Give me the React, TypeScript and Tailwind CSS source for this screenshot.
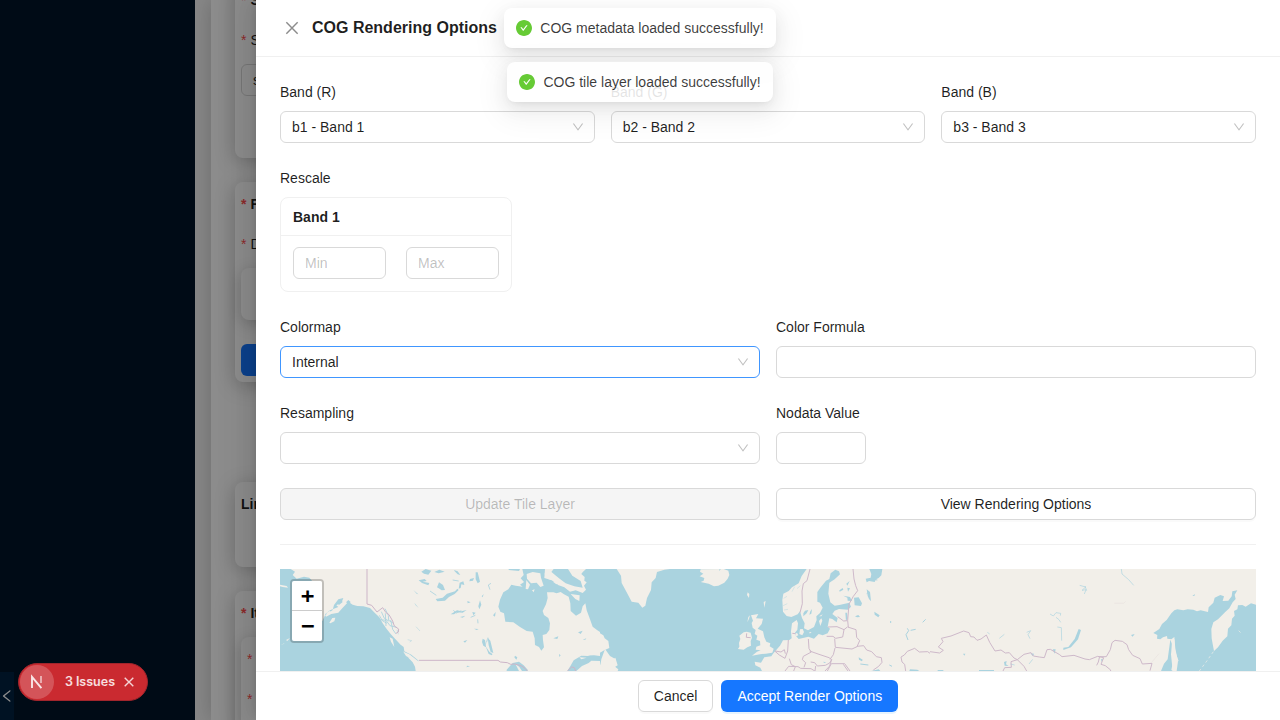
import type { ReactNode } from "react";

const DOWN =
  "M884 256h-75c-5.1 0-9.9 2.5-12.9 6.6L512 654.2 227.9 262.6c-3-4.1-7.8-6.6-12.9-6.6h-75c-6.5 0-10.3 7.4-6.5 12.7l352.6 486.1c12.8 17.6 39 17.6 51.7 0l352.6-486.1c3.9-5.3.1-12.7-6.4-12.7z";
const LEFT =
  "M724 218.3V141c0-6.7-7.7-10.4-12.9-6.3L260.3 486.8a31.86 31.86 0 000 50.3l450.8 352.1c5.3 4.1 12.9.4 12.9-6.3v-77.3c0-4.9-2.3-9.6-6.1-12.6l-360-281 360-281.1c3.8-3 6.1-7.7 6.1-12.6z";
const CHECK =
  "M512 64C264.6 64 64 264.6 64 512s200.6 448 448 448 448-200.6 448-448S759.4 64 512 64zm193.5 301.7l-210.6 292a31.8 31.8 0 01-51.7 0L318.5 484.9c-3.8-5.3 0-12.7 6.5-12.7h46.9c10.2 0 19.9 4.9 25.9 13.3l71.2 98.8 157.2-218c6-8.3 15.6-13.3 25.9-13.3H699c6.5 0 10.3 7.4 6.5 12.7z";

function Icon({ d, className }: { d: string; className: string }) {
  return (
    <svg viewBox="64 64 896 896" fill="currentColor" className={className}>
      <path d={d} />
    </svg>
  );
}

function Field({ label, children }: { label: string; children: ReactNode }) {
  return (
    <div className="min-w-0 flex-1">
      <div className="mb-2 h-[22px]">{label}</div>
      {children}
    </div>
  );
}

function Select({ value, active = false }: { value: string; active?: boolean }) {
  return (
    <div
      className={
        "flex h-8 items-center justify-between rounded-md border bg-white pl-[11px] pr-2.5 " +
        (active ? "border-[#4096ff]" : "border-[#d9d9d9]")
      }
    >
      <span>{value}</span>
      <Icon d={DOWN} className="size-3 text-black/25" />
    </div>
  );
}

function TextInput({ placeholder = "", className = "" }: { placeholder?: string; className?: string }) {
  return (
    <input
      placeholder={placeholder}
      className={"block h-8 rounded-md border border-[#d9d9d9] bg-white px-[11px] outline-none placeholder:text-black/25 " + className}
    />
  );
}

function Toast({ text }: { text: string }) {
  return (
    <div className="flex h-10 items-center gap-2 rounded-lg bg-white px-3 opacity-[0.88] shadow-[0_6px_16px_0_rgba(0,0,0,0.08),0_3px_6px_-4px_rgba(0,0,0,0.12),0_9px_28px_8px_rgba(0,0,0,0.05)]">
      <Icon d={CHECK} className="size-4 text-[#52c41a]" />
      <span>{text}</span>
    </div>
  );
}

function Star() {
  return <span className="mr-1 text-[#ff4d4f]">*</span>;
}

function WorldMap() {
  return (
    <svg viewBox="0 0 2928 306" className="block h-[102px] w-[976px] bg-[#f2efe9]" preserveAspectRatio="none">
      {/* North America */}
      <g transform="translate(-30 -27)">
        <g fill="#aad3df">
          <path d="M30 27H62L75 35 68 45 80 56 102 50 118 53 126 62 105 90 90 130 130 165 157 183 165 166 188 150 192 135 205 118 220 114 215 127 199 136 205 141 180 151 165 163 168 170 184 162 205 158 212 150 235 125 248 134 262 138 280 139 300 144 314 158 328 172 338 190 350 207 362 222 375 236 387 249 394 260 402 276 412 290 428 307 435 320 437 333H30Z" />
          <path d="M235 120l7 6-5 7 -9-6zM204 128l10-8 4 6-12 10z" />
          <path d="M385 249l16 12 2 13 21 10 22 18-3 5-17-12-15-4-12-19-13-14z" />
          <path d="M757 27L761 45 752 55 762 66 750 74 758 80 737 77 724 74 715 88 700 97 690 119 685 140 691 155 702 160 706 185 730 187 750 201 770 213 788 215 794 235 795 255 807 261 814 272 822 262 819 241 818 225 829 222 838 210 840 190 835 174 822 165 818 153 828 133 833 114 831 97 850 97 860 100 872 96 882 103 896 110 901 130 902 153 918 167 933 158 938 139 946 130 950 151 960 178 968 200 982 211 990 216V27H948L933 41 944 51 943 62 950 67 942 77 948 89 938 99 917 91 900 95 883 82 864 75 853 62 835 57 824 43 827 27Z" />
          <path d="M834 27h60l13 20 25 16 6 20-25-4-26-9-17-13-14-11zM716 27h34l-3 6-31-3z" />
          <path d="M497 117l21-4 13-12 24-7 7-8 4 4-12 12-17 9-12 11-23 2zM542 163l19-12 13 3 16-4-12 8-17-1-9 6zM566 86l3-18 11-4 3 11-9-2-2 11zM501 82l6-15 12 8 6 15-10 1-9-6zM446 61l18-4 6 6-12 2 20 4-3 7-19-7zM454 35l13-8 17 5-9 12-13-3zM493 36l15-7 16 6-18 5zM552 30l11 4 8 11-8-2-9-9zM617 37l6 0 7 28-7 5-6-12zM625 139l5-18 4 13-6 14zM607 156l10 2-7 8zM592 123l10 4-9 3zM600 57l12-3-3 8-11 2z" />
          <path d="M638 236l7 4 3 20 10 15 9 7-1 4-10-4-8-20-8-5-4-11zM653 233l8 9 9 37-8-3-6-20zM612 206l14 1-6 3zM580 244l12-4-7 8zM592 317l8 2-11 3zM735 287l7 5-3 7-6-7zM669 166l8-10-2 14zM570 171l16-4-8 6zM635 109l6-7-3 10zM850 235l15-6-3 8zM924 217l14-5-6 10zM938 239l11-4-3 4zM867 282l5 4-4 5zM430 90l15 13-5-2zM433 128l13 16-9-8z" />
          <path d="M710 329l18-20 19-4 14 11 12 13v4H710zM892 333l11-18 8-14 23-14 38-1 18 2v15l-26-1-8 7-20 9-17 15z" />
        </g>
        <g fill="#f2efe9">
          <path d="M30 74l20 4 4 5-16-2-8-2zM769 60l11 14-6 14-7-1zM770 42l18-6 23 4 2 13 8 24-10 4-11-13-17 2-12-14zM786 91l8-3-3 9zM905 27h38l-5 8-12 18-19-7zM825 27h26l-10 13 14 18 12 1 5 16 24 6 15 10-16-1-15-15-18-4-17-10-22-7zM849 65l17-5 8 6-15 7zM902 102l27 4-1 17-12-6zM935 286l30-9 10 2-22 9z" />
          <path d="M178 188l9-14 9-1-3 11-12 6zM359 232l9 4 5 25-10-16zM400 275l18 8 27 21 1 8-20-14-18-10zM169 159l11-7 4 7-12 8zM48 240l12-6-8 9zM32 254l12-4-3 2z" />
          <path d="M928 292l22 1-16 5zM961 316l18-8 11 3v22h-29zM736 311l12 10 8 12h-9z" />
        </g>
        <g fill="none" stroke="#aad3df" strokeWidth="2.5">
          <path d="M328 166l9 16 14 8M334 155l9 20 13 8M345 146l10 20 1 15 16 10M331 179l17 2 12 16 20 5M346 160l2 38M362 180l6 28 10 14M550 151l9 8 15-7M602 172l14-6M624 190l-1-12M660 89l-5-14 8-5M548 60l18 3M480 93l19 13" />
          <path strokeWidth="1.5" d="M381 209l4 14M413 239l12 3-6 4M438 200l12 13M646 254l8-22M655 235l-5 11" />
        </g>
        <g fill="none" stroke="#cdb5c8" strokeWidth="3">
          <path d="M291 27V132L305 136 321 156 338 143 348 158 357 164 368 183 373 198 386 207 385 216 378 220M447 301H684L691 306 712 308 722 313 734 312 755 318 765 325 772 333M892 333l13-12 8 2 4 10" />
        </g>
      </g>

      {/* Atlantic and Europe */}
      <g transform="translate(960 -27)">
        <path fill="#aad3df" d="M0 27H620L605 48 596 70 576 82 566 93 550 101 547 120 549 155 560 168 574 171 593 163 600 154 606 174 614 190 612 205 624 211 642 201 650 180 649 169 660 159 668 143 660 128 652 125 652 96 661 83 678 62 688 57 692 40 706 29 717 34 720 43 704 58 688 68 685 101 691 127 704 137 718 135 748 128 753 140 744 149 717 147 704 152 697 162 713 174 710 187 697 177 688 175 683 200 690 206 683 220 668 226 656 222 642 236 625 230 596 237 588 228 585 218 592 209 594 190 590 180 576 190 573 214 575 235 568 240 549 241 540 257 532 266 519 281 514 289 493 292 483 308 464 305 466 316 481 323 486 333H52L45 321 53 316 46 293 38 300 33 292 19 291 8 306 4 318 0 312V278L14 270 28 264 25 243 14 235 10 226 0 220Z" />
        <g fill="#f2efe9">
          <path d="M50 27l13 20 2 22 15 28 15 28 20 3 12 15 9-6 5-23 12-24 2-23 12-13 4-18 22-7 17-2zM302 28l-2 7 10 6-11 8 14 5-2 8-9 4 24 5 16 8 13-2 18-9 10-12 5-11-3-13-14-5zM453 166l22-4-7 13 21 1-4 16-12 14 16 8 4 18 6 13 12 5-2 9 12 7-4 12-20 3-17 2-24 4 15-12 11-4-15-2 2-9 12-4-1-13-11-4 3-12-8-5 3-12-9-7-3-14 4-7zM431 217l-13 10 3 10-4 12 1 11-4 7 17 2 11-7 11-5-1-14 4-10-4-15-12-3zM443 97l5 5-1 12-6-9zM491 126l6-3-4 20zM445 171l5-5-3 10-5 11zM600 208l8-1 4 9-5 10-9-4zM586 222l5-4 4 8-6 3zM657 183l7-8 3 7-6 16zM657 169l11-6-4 6zM630 215l5 4-8 1z" />
          <path d="M15 267l15 21 16 9-3 22 12 9-2 5-25-5-14-10-14 3 4-23z" />
        </g>
        <g fill="#aad3df">
          <path d="M610 160l5-8 10-2-5 10-10 9zM628 164l3-10 5-7-2 14zM762 113l14-1 10 18-3 8-19-2zM736 158l5 0 2 17-5 8zM800 67l-3-11 15-3 2-11-6-15h39l-3 19-8 8-8 4-4 8-17-3zM800 88l10 8 3 28-6-7-4-9zM823 155l16 11-4 6-11-8zM765 169l10-4 5 6-9 1zM742 83l8 2-6 10zM718 91l10-7 2 5-11 6zM730 107l20 4 6 12-13-1-1-9zM776 292l12 7-2 5-9-5zM814 333l22-5 5 5zM930 328l22 1 6 4h-30zM739 71l10-8-7 14z" />
          <path d="M670 305l9 2-7 2z" />
        </g>
        <g fill="none" stroke="#aad3df" strokeWidth="3">
          <path d="M922 205l4 7-8 12 6 16M932 211l15-3M968 187l9-9M872 183l0 6M868 315l8 4M362 27l-5 4M781 312l24 3M800 101l7-5M817 57l15 3" />
          <path strokeWidth="1.2" d="M551 115l10-6M549 137l13-6M552 150l12-2M584 80l-8 15M601 77l-10 9" />
        </g>
        <g fill="none" stroke="#ceb9ca" strokeWidth="3">
          <path d="M630 27l-9 35-11 9-4 22 1 38-7 27M759 27l3 30 5 20 6 15-13 17-6 11-7 12-4 49 2 21M713 170l18 13 11-1M684 201l27-1 21 9 10-8M732 209l-4 22-21 4-8-6h-19M743 201l25 8 2 23 9 10-8 18-15 7-50-5-2-26M625 237l2 29 7 10-24 13-3 10 10 9-5 14M629 273l28 10 30 10 8 6-6 10-13 7-24 2-8-10-12-2M695 298l-6 20-14 15M705 264l-5 20-10 14M771 259l20-2 9 13 15 5 14 15 15 3 2 14-10 12-16 11M565 240l-2 33-8 22-17-10-14-12M568 296l6 18 12 6-5 13M526 273l17 3 10-7 3 12M555 333l11-14 28 1 8 5 31 1 13 8M645 333l2-15M682 333l12-22 40 0 16 22M730 313l14 20M577 220l9 1M440 220l-1 12 13 1M990 280l-7-5-25 1-14-11-22 9-9 11-10 6 3 15 8 7 3 20" />
        </g>
      </g>

      {/* Siberia and the Sea of Okhotsk */}
      <g transform="translate(1950 -27)">
        <path fill="#aad3df" d="M670 219L688 207 696 192 710 180 724 160 733 151 742 148 760 151 773 148 790 149 801 154 812 151 834 156 836 142 850 128 854 113 871 105 882 109 878 123 895 122 905 109 907 94 922 91 914 104 917 117 908 127 898 145 885 157 864 178 850 187 844 207 845 235 848 252 852 273 864 262 878 242 892 229 894 206 904 196 906 176 914 167 912 153 922 148 924 136 937 135 947 140 963 130 978 134V333H740L744 304 736 266 733 231 724 238 712 236 711 228 699 232 691 238 681 236 682 225Z" />
        <path fill="#aad3df" d="M721 239l5 12-3 32 5 50h-35l9-22 11-13zM446 207l7 3-9 28-21 24-23 8 0-7 15-2 19-24zM368 268h9l-3 13zM301 280l11 1-3 8zM147 330h45v3h-45zM222 306l8-3-2 10 8 5-12-1zM99 281l7 0-3 6zM513 298l6-2-4 10zM603 225l11-3-6 8zM787 108l8-6-2 6zM23 330h17v3H23z" />
        <path fill="none" stroke="#aad3df" strokeWidth="2" d="M574 27l2 15 20 17 15 17M449 76l18 5-11 10 12-2-5 13M465 78l5 14M360 162l10 6 8-10 14 2-1 7M378 172l9 7 5 8M382 201l12 2 1 39M290 217l12-5-8 12 6 12M208 235l15-12M172 217l7 5M241 312l13 3M308 298l-11 14" />
        <path fill="#f2efe9" d="M725 238l8 0 3 37 10 29-9-4-2 21-6 12-5-3 5-25-3-28z" />
        <path fill="none" stroke="#f2efe9" strokeWidth="2" strokeDasharray="8 8" d="M850 275l-18 26-24 32M926 212l8 8" />
        <path fill="none" stroke="#ceb9ca" strokeWidth="3" d="M0 275l29 4 11-8-15-10 14-16-5-10 29-7 38-15 16 5 5 12 10 1 9 10 12-4 16-12 10 22 16 26 18-3 13 9 12-1 14 16 10 5 20-16 21-5 7 10 18 3 15 2 8-24 10-1 28 16 7 6 36-4 33 11 13 2 25-10 18 4-8 20 13 4 16 13-1 8M509 290l20 0 12-21 5-21 9-7 22 3 14 10 5 15 12 17 22 10 7 16 29-2-6 22M262 299l-19 6 1 17-20 1-5 10M262 299l20 20 8 14M509 289l-4 17-5 10" />
        <path fill="none" stroke="#e8e3df" strokeWidth="2" d="M553 130h28l6-6M665 307l22-26" />
      </g>
    </svg>
  );
}

function ItemForm() {
  return (
    <div className="h-[720px] overflow-hidden bg-[#f5f5f5] pl-4">
      <div className="flow-root h-[720px] bg-white pl-6 shadow-[0_0_20px_rgba(0,0,0,0.2)]">
        <div className="-mt-10 h-[198px] rounded-lg px-1.5 pt-[29px] shadow-[0_4px_20px_rgba(0,0,0,0.25)]">
          <div className="h-[40px] font-bold"><Star />STAC</div>
          <div className="h-[35px]"><Star />STAC</div>
          <div className="h-8 w-60 rounded-md border border-[#d9d9d9] px-[11px] leading-[30px]">sta</div>
        </div>
        <div className="mt-6 h-[200px] rounded-lg px-1.5 pt-[11px] shadow-[0_4px_20px_rgba(0,0,0,0.25)]">
          <div className="h-10 font-bold"><Star />File</div>
          <div className="h-[35px]"><Star />Data</div>
          <div className="h-[52px] rounded-lg shadow-[0_4px_16px_rgba(0,0,0,0.22)]" />
          <div className="mt-6 h-8 rounded-md bg-[#1677ff]" />
        </div>
        <div className="mt-[100px] h-[85px] rounded-lg px-1.5 pt-[11px] font-bold shadow-[0_4px_20px_rgba(0,0,0,0.25)]">
          Links
        </div>
        <div className="mt-6 h-[250px] rounded-lg px-1.5 pt-[11px] shadow-[0_4px_20px_rgba(0,0,0,0.25)]">
          <div className="h-[35px] font-bold"><Star />Item</div>
          <div className="h-[180px] rounded-lg px-1.5 pt-[11px] shadow-[0_4px_16px_rgba(0,0,0,0.22)]">
            <div className="h-10"><Star /></div>
            <div className="h-10"><Star /></div>
          </div>
        </div>
      </div>
    </div>
  );
}

export default function App() {
  return (
    <div className="relative h-[720px] w-[1280px] overflow-hidden font-['Liberation_Sans',sans-serif] text-sm leading-[22px] text-black/[0.88]">
      <div className="flex h-full">
        <aside className="flex w-[195px] shrink-0 flex-col justify-end bg-[#001529]">
          <div className="flex h-12 w-3.5 items-center bg-[#002140] text-white">
            <Icon d={LEFT} className="size-3.5 shrink-0" />
          </div>
        </aside>
        <main className="min-w-0 flex-1">
          <ItemForm />
        </main>
      </div>

      <div className="absolute inset-0 bg-black/45" />

      <section className="absolute inset-y-0 right-0 flex w-[1024px] flex-col bg-white shadow-[-6px_0_16px_0_rgba(0,0,0,0.08),-3px_0_6px_-4px_rgba(0,0,0,0.12),-9px_0_28px_8px_rgba(0,0,0,0.05)]">
        <header className="flex h-[57px] shrink-0 items-center border-b border-[#f0f0f0] px-7">
          <svg viewBox="64 64 896 896" className="mr-3 size-4 text-black/45" stroke="currentColor" strokeWidth="82">
            <path d="M195 195L829 829M829 195L195 829" />
          </svg>
          <h1 className="text-base font-bold leading-6">COG Rendering Options</h1>
        </header>

        <div className="min-h-0 flex-1 overflow-hidden px-6 pt-6">
          <div className="flex gap-4">
            <Field label="Band (R)"><Select value="b1 - Band 1" /></Field>
            <Field label="Band (G)"><Select value="b2 - Band 2" /></Field>
            <Field label="Band (B)"><Select value="b3 - Band 3" /></Field>
          </div>

          <div className="mt-6">
            <Field label="Rescale">
              <div className="h-[95px] w-[232px] rounded-lg border border-[#f0f0f0]">
                <div className="h-[38px] border-b border-[#f0f0f0] px-3 leading-[38px] font-bold">Band 1</div>
                <div className="flex justify-between px-3 pt-[11px]">
                  <TextInput placeholder="Min" className="w-[93px]" />
                  <TextInput placeholder="Max" className="w-[93px]" />
                </div>
              </div>
            </Field>
          </div>

          <div className="mt-6 flex gap-4">
            <Field label="Colormap"><Select value="Internal" active /></Field>
            <Field label="Color Formula"><TextInput className="w-full" /></Field>
          </div>
          <div className="mt-6 flex gap-4">
            <Field label="Resampling"><Select value="" /></Field>
            <Field label="Nodata Value"><TextInput className="w-[90px]" /></Field>
          </div>

          <div className="mt-6 flex gap-4">
            <button className="h-8 flex-1 rounded-md border border-[#d9d9d9] bg-black/[0.04] text-black/25">Update Tile Layer</button>
            <button className="h-8 flex-1 rounded-md border border-[#d9d9d9] bg-white shadow-[0_2px_0_rgba(0,0,0,0.02)]">View Rendering Options</button>
          </div>

          <div className="my-6 h-px bg-[#f0f0f0]" />

          <div className="relative">
            <WorldMap />
            <div className="absolute left-2.5 top-2.5 rounded border-2 border-black/20 bg-clip-padding text-center font-['DejaVu_Sans_Mono',monospace] text-[22px] font-bold text-black">
              <div className="h-[30px] w-[30px] rounded-t-[2px] border-b border-[#ccc] bg-white indent-px leading-[30px]">+</div>
              <div className="h-[30px] w-[30px] rounded-b-[2px] bg-white indent-px leading-[30px]">−</div>
            </div>
          </div>
        </div>

        <footer className="flex h-[49px] shrink-0 justify-center gap-2 border-t border-[#f0f0f0] bg-white pt-2">
          <button className="h-8 rounded-md border border-[#d9d9d9] px-[15px] shadow-[0_2px_0_rgba(0,0,0,0.02)]">Cancel</button>
          <button className="h-8 rounded-md bg-[#1677ff] px-4 text-white shadow-[0_2px_0_rgba(5,145,255,0.1)]">Accept Render Options</button>
        </footer>
      </section>

      <div className="absolute inset-x-0 top-2 flex flex-col items-center gap-3.5">
        <Toast text="COG metadata loaded successfully!" />
        <Toast text="COG tile layer loaded successfully!" />
      </div>

      <div className="absolute left-[18px] top-[663px] flex h-[38px] w-[130px] items-center rounded-full border border-[#a0252c] bg-[#ca2a30] pl-px font-['Inter',sans-serif] text-[12.5px] font-semibold text-white/85">
        <div className="flex size-[34px] items-center justify-center rounded-full bg-white/20">
          <svg width="16" height="16" viewBox="0 0 16 16" fill="none" stroke="white" strokeWidth="1.9">
            <path d="M3 14V2.8L12.4 14.2" strokeOpacity=".85" />
            <path d="M12 2v7" strokeOpacity=".55" />
          </svg>
        </div>
        <div className="ml-[11px] flex w-[50px] justify-between">
          <span>3</span>
          <span>Issues</span>
        </div>
        <svg width="10" height="10" viewBox="0 0 10 10" className="ml-[9px]" stroke="white" strokeOpacity=".8" strokeWidth="1.4">
          <path d="M.7.7l8.6 8.6M9.3.7L.7 9.3" />
        </svg>
      </div>
    </div>
  );
}
